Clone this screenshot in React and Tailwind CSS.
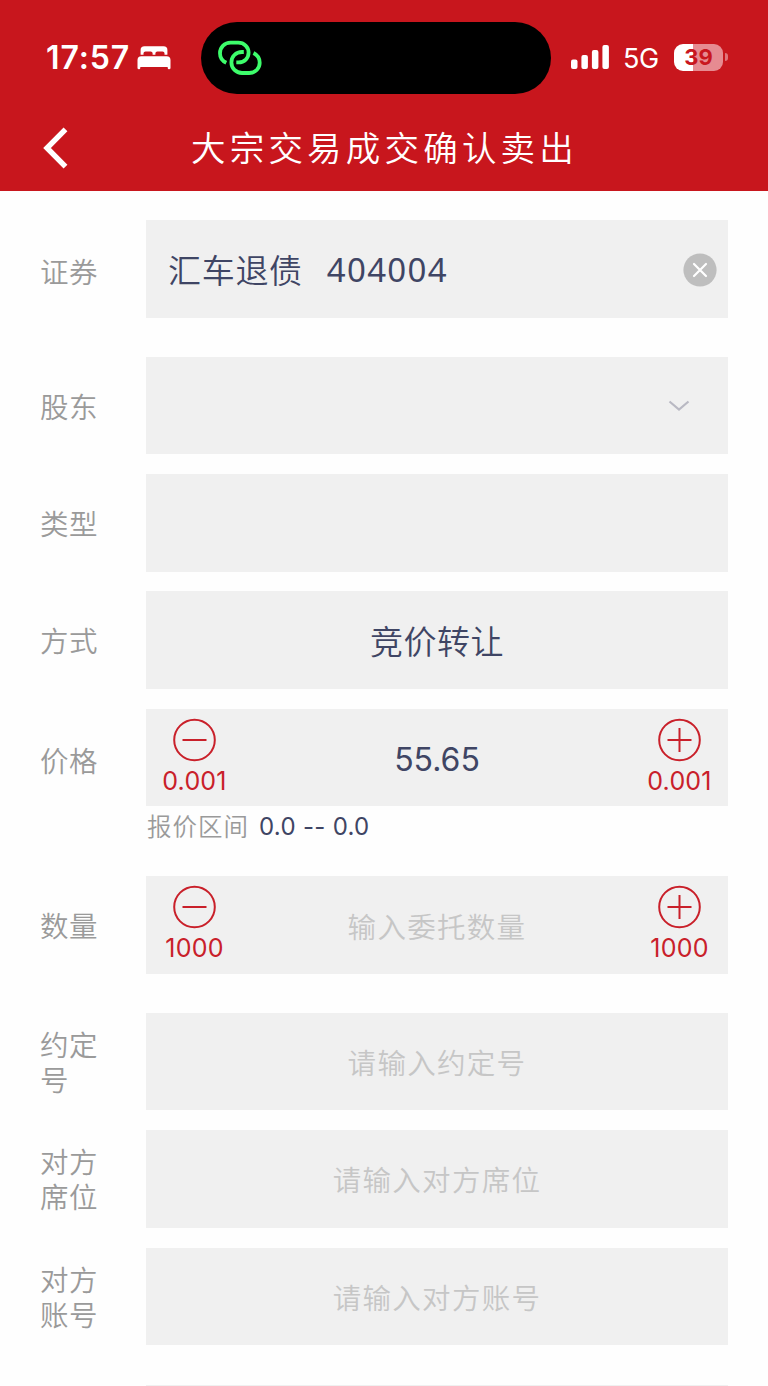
import clsx from 'clsx'

function StatusBar() {
  return (
    <div className="flex h-[94px] items-start pt-[22px] text-white">
      <div className="flex h-[72px] w-[201px] items-center pl-[46px]">
        <span className="w-[91px] text-[32px] leading-none font-semibold tracking-[0.9px] whitespace-nowrap">17:57</span>
        <svg className="mb-[1px] h-[24px] w-[34px]" viewBox="0 0 34 24" fill="currentColor">
          <path d="M3.6 8.7V4Q3.6 .3 7.500 .3H26.500Q30.400 .3 30.400 4V8.700H27.500V7.200Q27.500 5.500 25.500 5.500H20.400Q18.400 5.500 18.400 7.200V8.700H15.600V7.200Q15.600 5.500 13.600 5.500H8.500Q6.500 5.500 6.500 7.200V8.700Z" />
          <path d="M.5 22V14Q.5 10.200 4.300 10.200H29.700Q33.500 10.200 33.500 14V22Q33.500 23.300 32 23.300Q30.700 23.300 30.700 22V20.900H3.300V22Q3.300 23.300 2 23.300Q.5 23.300 .5 22Z" />
        </svg>
      </div>

      {/* Dynamic island */}
      <div className="flex h-[72px] w-[350px] items-center rounded-full bg-black pl-4">
        <svg className="h-9 w-[46px]" viewBox="0 0 46 36" fill="none" stroke="#3dfd6b" strokeWidth="3.8">
          <path d="M9.300 22.800C5.500 21 3 17.500 3 13.200C3 7.200 7.700 2.700 13.500 2.700H21.200C27.200 2.700 31.600 7 31.600 12.600C31.600 18.200 27.500 22.400 21.500 22.400H19.300" />
          <path d="M26.800 12H25C18.800 12 14.400 16.600 14.400 22.400C14.400 28.400 19 33 25 33H32.200C38.300 33 42.700 28.400 42.700 22.800C42.700 18.500 40.300 14.900 36.500 13" />
        </svg>
      </div>

      <div className="flex h-[72px] flex-1 items-center pl-[20px]">
        <svg className="mb-[2px] h-6 w-[38px]" viewBox="0 0 38 24" fill="currentColor">
          <rect x="0" y="14.500" width="6.500" height="9.500" rx="2" />
          <rect x="10.400" y="10" width="6.500" height="14" rx="2" />
          <rect x="20.900" y="5" width="6.500" height="19" rx="2" />
          <rect x="31.400" y="0" width="6.500" height="24" rx="2" />
        </svg>
        <span className="ml-[14px] w-[51px] text-[27px] leading-none tracking-[-0.500px]">5G</span>
        <div className="mb-[2px] flex h-[27px] w-[49px] items-center justify-center rounded-[9px] bg-[linear-gradient(90deg,#fff_39%,#e68b91_39%)] text-[22px] leading-none font-bold text-[#c9161e]">
          39
        </div>
        <div className="mb-[2px] ml-[1.500px] h-[8px] w-[3px] rounded-r-full bg-[#e0747b]" />
      </div>
    </div>
  )
}

function NavBar({ title }) {
  return (
    <div className="flex h-[97px] items-start">
      <svg className="mt-[33px] ml-[43px] h-[42px] w-[26px]" viewBox="0 0 26 42" fill="none" stroke="#fff" strokeWidth="5.400">
        <path d="M22.500 2.300L4 21L22.500 39.700" />
      </svg>
      <h1 className="mt-[30px] ml-[122px] text-[34.500px] leading-[50px] font-[350] tracking-[4.200px] whitespace-nowrap text-white">
        {title}
      </h1>
    </div>
  )
}

function Row({ label, className, labelClass = 'pt-[3px]', boxClass, children }) {
  return (
    <div className={clsx('flex h-[97.600px] items-center', className)}>
      <div className="w-[106px] shrink-0">
        <div className={clsx('w-[64px] text-[28.500px] leading-[35px] font-[350] tracking-[0.400px] text-[#9a9a9a]', labelClass)}>{label}</div>
      </div>
      <div className={clsx('flex h-full flex-1 items-center bg-[#f0f0f0]', boxClass)}>{children}</div>
    </div>
  )
}

function StepButton({ plus, step }) {
  return (
    <button className="flex h-full w-[97px] flex-col items-center pt-[9px] text-[#c9202a]">
      <svg className="size-[44px]" viewBox="0 0 44 44" fill="none" stroke="currentColor" strokeWidth="2">
        <circle cx="21.500" cy="22" r="20.300" />
        <path d="M9.500 22H33.500" />
        {plus && <path d="M21.500 10V34" />}
      </svg>
      <span className="mt-[5px] text-[25px] leading-[28px] tracking-[0.200px]">{step}</span>
    </button>
  )
}

function Stepper({ step, children }) {
  return (
    <>
      <StepButton step={step} />
      <div className="flex-1 text-center">{children}</div>
      <StepButton step={step} plus />
    </>
  )
}

function Placeholder({ children }) {
  return (
    <span className="block w-full pt-[5px] text-center text-[28.500px] leading-10 font-[350] tracking-[1.300px] text-[#c6c6c6]">
      {children}
    </span>
  )
}

export default function App() {
  return (
    <div className="h-[1386px] w-[768px] overflow-hidden bg-[#fefefe] font-['Inter','Noto_Sans_CJK_SC',sans-serif]">
      <header className="h-[191px] bg-[#c8161d]">
        <StatusBar />
        <NavBar title="大宗交易成交确认卖出" />
      </header>

      <main className="pt-[29px] pr-[40px] pl-[40px]">
        <Row label="证券" labelClass="pt-[8px]">
          <span className="ml-[22px] pt-[5px] text-[33px] font-[350] tracking-[0.700px] text-[#3f4564]">汇车退债</span>
          <span className="ml-[24px] flex-1 pt-[2px] font-['Noto_Sans',sans-serif] text-[33px] tracking-[1.300px] text-[#3f4564]">404004</span>
          <svg className="mt-[3px] mr-[11px] size-[34px]" viewBox="0 0 34 34" fill="none">
            <circle cx="17" cy="17" r="16.600" fill="#bebebe" />
            <path d="M11 11L23 23M23 11L11 23" stroke="#fff" strokeWidth="2.200" strokeLinecap="round" />
          </svg>
        </Row>

        <Row label="股东" className="mt-[39.200px]" boxClass="justify-end">
          <svg className="mr-[38px] h-[12px] w-[22px]" viewBox="0 0 22 12" fill="none" stroke="#b9b9c3" strokeWidth="2.200">
            <path d="M1.500 1.500L11 9.500L20.500 1.500" />
          </svg>
        </Row>

        <Row label="类型" className="mt-[19.600px]" />

        <Row label="方式" className="mt-[19.800px]" boxClass="justify-center">
          <span className="pt-[6px] text-[33px] font-[350] tracking-[0.500px] text-[#3f4564]">竞价转让</span>
        </Row>

        <Row label="价格" className="mt-[19.800px]" labelClass="pt-[8px]">
          <Stepper step="0.001">
            <span className="inline-block pt-[4px] text-[32px] text-[#3f4564]">55.65</span>
          </Stepper>
        </Row>
        <div className="ml-[107px] flex h-[70px] items-start pt-[3px] text-[24.500px] leading-[36px]">
          <span className="font-[350] tracking-[1px] text-[#9a9a9a]">报价区间</span>
          <span className="ml-[10px] text-[24px] tracking-[0.300px] text-[#3f4564]">0.0 -- 0.0</span>
        </div>

        <Row label="数量">
          <Stepper step="1000">
            <Placeholder>输入委托数量</Placeholder>
          </Stepper>
        </Row>

        <Row label="约定号" className="mt-[38.800px]">
          <Placeholder>请输入约定号</Placeholder>
        </Row>
        <Row label="对方席位" className="mt-[19.800px]">
          <Placeholder>请输入对方席位</Placeholder>
        </Row>
        <Row label="对方账号" className="mt-[19.800px]">
          <Placeholder>请输入对方账号</Placeholder>
        </Row>
        <div className="mt-[39.500px] ml-[106px] h-[97px] bg-[#f0f0f0]" />
      </main>
    </div>
  )
}
